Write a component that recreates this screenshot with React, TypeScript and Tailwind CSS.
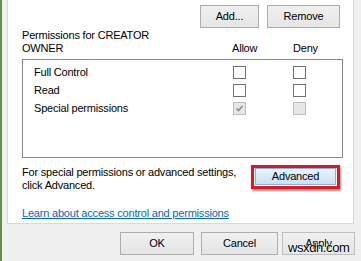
import React from 'react';

const font = { fontFamily: '"Liberation Sans", Arial, sans-serif' };

const Check = ({ checked = false, disabled = false }: { checked?: boolean; disabled?: boolean }) => (
  <div
    className={
      'w-[13px] h-[13px] border flex items-center justify-center ' +
      (disabled ? 'border-[#bcbcbc] bg-[#e6e6e6]' : 'border-[#707070] bg-white')
    }
  >
    {checked && (
      <svg width="9" height="9" viewBox="0 0 9 9">
        <path d="M1.5 4.5 L3.5 6.5 L7.5 2" fill="none" stroke="#8a8a8a" strokeWidth="1.6" />
      </svg>
    )}
  </div>
);

const Btn = ({ children, className = '' }: { children: React.ReactNode; className?: string }) => (
  <div
    className={
      'h-[23px] flex items-center justify-center border border-[#adadad] bg-gradient-to-b from-[#f0f0f0] to-[#e5e5e5] text-black ' +
      className
    }
  >
    {children}
  </div>
);

const rows = [
  { name: 'Full Control', allow: false, deny: false, disabled: false },
  { name: 'Read', allow: false, deny: false, disabled: false },
  { name: 'Special permissions', allow: true, deny: false, disabled: true },
];

export default function App() {
  return (
    <div
      className="relative w-[361px] h-[261px] overflow-hidden bg-[#f0f0f0] text-[11px] tracking-[-0.2px] text-black"
      style={font}
    >
      <div className="flex">
        {/* window frame edge */}
        <div className="w-[2px] h-[261px] bg-[#5f8f45]" />

        <div className="flex flex-col">
          {/* tab page */}
          <div className="ml-[5px] w-[347px] h-[224px] bg-white border-x border-b border-[#d9d9d9] pl-[14px] pr-[10px]">
            <div className="flex justify-end gap-[8px] mt-[5px] mr-[3px]">
              <Btn className="w-[59px]">Add...</Btn>
              <Btn className="w-[73px]">Remove</Btn>
            </div>

            <div className="flex items-end mt-[1px] leading-[13px]">
              <div className="w-[210px]">
                Permissions for CREATOR
                <br />
                OWNER
              </div>
              <div className="w-[61px]">Allow</div>
              <div>Deny</div>
            </div>

            <div className="mt-[4px] h-[99px] border border-[#828790] pt-[3px]">
              {rows.map((r) => (
                <div key={r.name} className="flex items-center h-[18px]">
                  <div className="w-[210px] pl-[11px]">{r.name}</div>
                  <Check checked={r.allow} disabled={r.disabled} />
                  <div className="ml-[47px]">
                    <Check checked={r.deny} disabled={r.disabled} />
                  </div>
                </div>
              ))}
            </div>

            <div className="flex justify-between items-start mt-[7px] leading-[13px]">
              <div className="pt-[1px]">
                For special permissions or advanced settings,
                <br />
                click Advanced.
              </div>
              <div className="mr-[3px] border-[3px] border-[#e3141b] px-[1px] pt-0 pb-[1px] shadow-[1px_2px_2px_rgba(0,0,0,0.45)]">
                <div className="w-[81px] h-[17px] flex items-center justify-center border border-[#7eb4ea] bg-gradient-to-b from-[#ecf4fc] to-[#c8e0f8]">
                  Advanced
                </div>
              </div>
            </div>

            <div className="mt-[15px] leading-[13px]">
              <span className="text-[#0066cc] underline">Learn about access control and permissions</span>
            </div>
          </div>

          {/* dialog buttons */}
          <div className="flex mt-[8px] ml-[118px]">
            <Btn className="w-[74px] border-[#3c7fb1] h-[22px]">OK</Btn>
            <Btn className="w-[77px] ml-[7px] h-[22px]">Cancel</Btn>
            <Btn className="w-[73px] ml-[4px] h-[22px] text-[#a0a0a0] border-[#bfbfbf]">Apply</Btn>
          </div>
        </div>
      </div>

      {/* watermark */}
      <div
        className="absolute left-[288px] top-[240px] text-[13px] leading-[16px] tracking-[-0.4px] text-black [text-shadow:0_0_2px_#fff,0_0_2px_#fff]"
        style={font}
      >
        wsxdn.com
      </div>
    </div>
  );
}
